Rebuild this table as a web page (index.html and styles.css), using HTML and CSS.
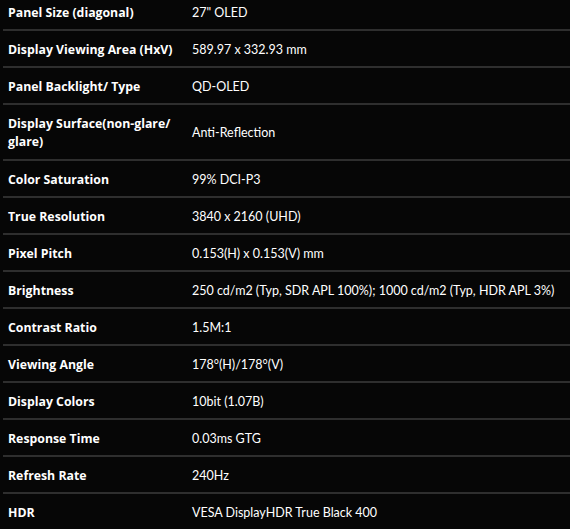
FILE: index.html
```html
<!DOCTYPE html>
<html>
<head>
<meta charset="utf-8">
<link rel="stylesheet" href="styles.css">
</head>
<body>
<div class="specs">
  <div class="row"><div class="label">Panel Size (diagonal)</div><div class="value">27" OLED</div></div>
  <div class="row"><div class="label">Display Viewing Area (HxV)</div><div class="value">589.97 x 332.93 mm</div></div>
  <div class="row"><div class="label">Panel Backlight/ Type</div><div class="value">QD-OLED</div></div>
  <div class="row tall"><div class="label">Display Surface(non-glare/ glare)</div><div class="value">Anti-Reflection</div></div>
  <div class="row"><div class="label">Color Saturation</div><div class="value">99% DCI-P3</div></div>
  <div class="row"><div class="label">True Resolution</div><div class="value">3840 x 2160 (UHD)</div></div>
  <div class="row"><div class="label">Pixel Pitch</div><div class="value">0.153(H) x 0.153(V) mm</div></div>
  <div class="row"><div class="label">Brightness</div><div class="value">250 cd/m2 (Typ, SDR APL 100%); 1000 cd/m2 (Typ, HDR APL 3%)</div></div>
  <div class="row"><div class="label">Contrast Ratio</div><div class="value">1.5M:1</div></div>
  <div class="row"><div class="label">Viewing Angle</div><div class="value">178°(H)/178°(V)</div></div>
  <div class="row"><div class="label">Display Colors</div><div class="value">10bit (1.07B)</div></div>
  <div class="row"><div class="label">Response Time</div><div class="value">0.03ms GTG</div></div>
  <div class="row"><div class="label">Refresh Rate</div><div class="value">240Hz</div></div>
  <div class="row"><div class="label">HDR</div><div class="value">VESA DisplayHDR True Black 400</div></div>
</div>
</body>
</html>
```
FILE: styles.css
```css
html, body {
  margin: 0;
  padding: 0;
  background: #060606;
  overflow: hidden;
}
body {
  padding-left: 3px;
  color: #fff;
}
.specs {
  display: flex;
  flex-direction: column;
  margin-top: -6px;
}
.row {
  box-sizing: border-box;
  height: 37px;
  display: grid;
  grid-template-columns: 184px 1fr;
  align-items: center;
  border-bottom: 2px solid #2e2e2e;
  padding-top: 2px;
}
.row.tall {
  height: 56px;
}
.label, .value {
  padding-left: 5px;
  line-height: 18px;
  white-space: nowrap;
}
.label {
  font-family: "Open Sans", "Noto Sans", sans-serif;
  font-size: 12.3px;
  font-weight: 700;
  white-space: normal;
  padding-right: 8px;
}
.value {
  padding-left: 5px;
  font-family: "Lato", "Open Sans", sans-serif;
  font-size: 12.5px;
  font-weight: 400;
}
```
